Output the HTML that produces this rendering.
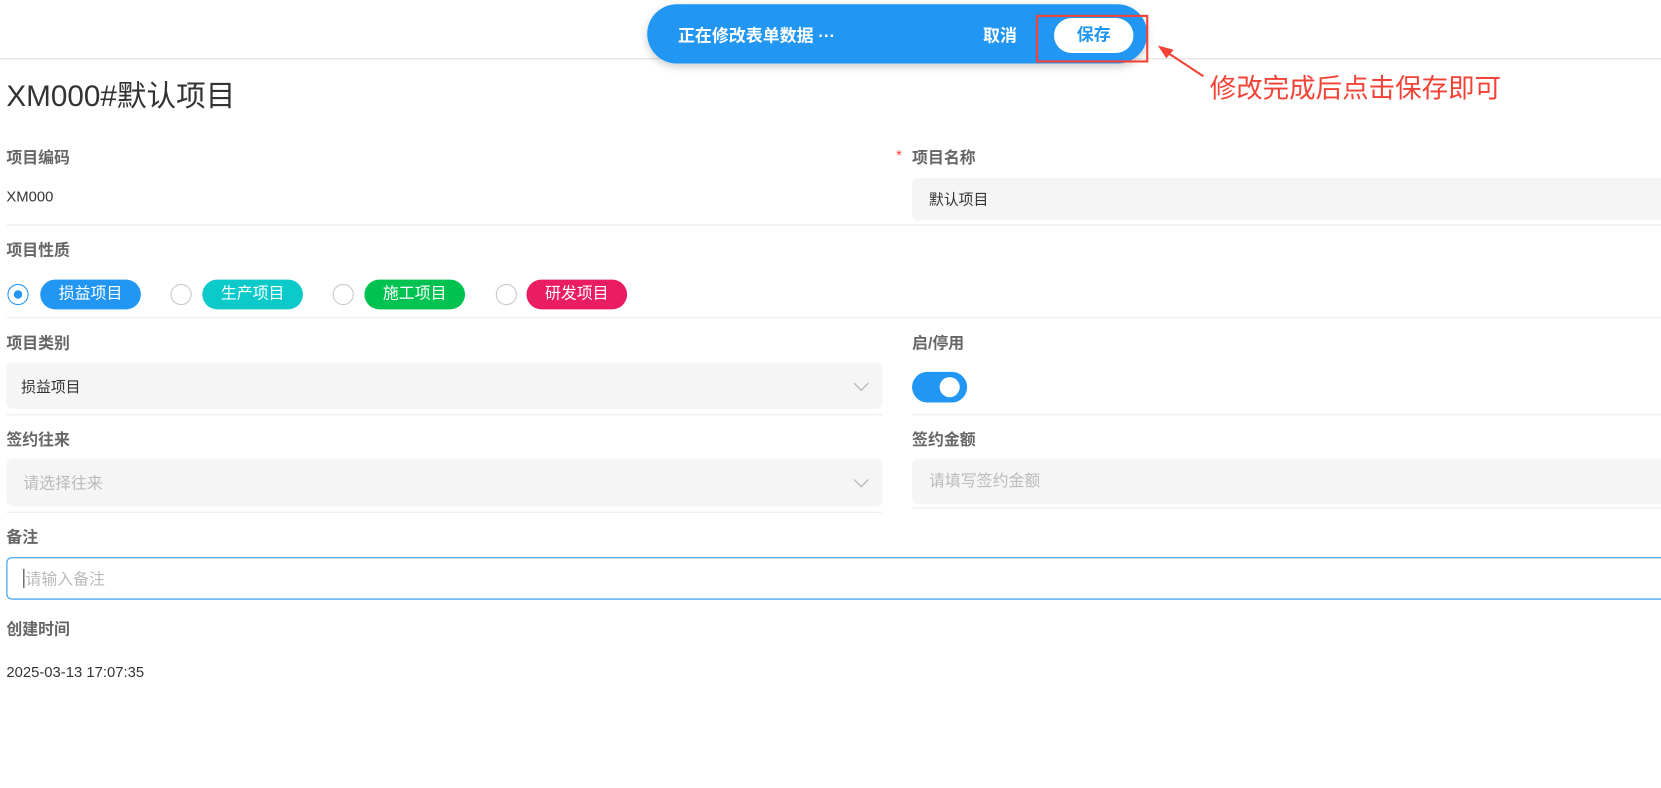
<!DOCTYPE html>
<html><head><meta charset="utf-8"><style>
*{box-sizing:border-box;margin:0;padding:0}
body{width:1661px;height:788px;background:#fff;font-family:"Liberation Sans","Noto Sans CJK SC",sans-serif;position:relative;overflow:hidden;color:#333}
#w{position:absolute;left:0;top:0;width:1568px;height:744px;transform:scale(1.0593);transform-origin:0 0}
.a{position:absolute}
.lbl{font-size:15px;font-weight:bold;color:#666}
.val{font-size:14px;color:#333}
.line{height:1px;background:#ebebeb}
.box{background:#f5f5f5;border-radius:6px}
.tag{height:28px;border-radius:14px;color:#fff;font-size:15px;line-height:28px;text-align:center;width:95px}
.rad{width:20px;height:20px;border:1.5px solid #c8c8c8;border-radius:50%}
.chev{width:10px;height:10px;border-right:1.5px solid #aaa;border-bottom:1.5px solid #aaa;transform:rotate(45deg)}
</style></head><body><div id="w">
<div class="a" style="left:0;top:55px;width:1661px;height:1px;background:#dcdcdc"></div>
<div class="a" style="left:611px;top:4px;width:472px;height:56px;border-radius:28px;background:#2196f3;box-shadow:0 3px 8px rgba(0,0,0,.2)"></div>
<div class="a" style="left:640px;top:20px;color:#fff;font-weight:bold;font-size:16px">正在修改表单数据 ···</div>
<div class="a" style="left:928px;top:20px;color:#fff;font-weight:bold;font-size:16px">取消</div>
<div class="a" style="left:995px;top:17px;width:75px;height:33px;border-radius:17px;background:#fff;color:#2196f3;font-weight:bold;font-size:16px;text-align:center;line-height:33px">保存</div>
<div class="a" style="left:978px;top:14px;width:106px;height:45px;border:2px solid #f44336"></div>
<svg class="a" style="left:1090px;top:40px" width="50" height="36"><line x1="46" y1="32" x2="8" y2="7" stroke="#f44336" stroke-width="2"/><polygon points="3,3 18,7 11,15" fill="#f44336"/></svg>
<div class="a" style="left:1142px;top:64px;color:#f44336;font-size:25px">修改完成后点击保存即可</div>
<div class="a" style="left:6px;top:69px;font-size:28px;color:#333">XM000#默认项目</div>

<div class="a lbl" style="left:6px;top:138px">项目编码</div>
<div class="a val" style="left:6px;top:177px">XM000</div>
<div class="a" style="left:846px;top:138px;color:#f44336;font-size:14px">*</div>
<div class="a lbl" style="left:861px;top:138px">项目名称</div>
<div class="a box" style="left:861px;top:168px;width:820px;height:40px"></div>
<div class="a val" style="left:877px;top:178px">默认项目</div>
<div class="a line" style="left:6px;top:212px;width:1655px"></div>

<div class="a lbl" style="left:6px;top:225px">项目性质</div>
<div class="a rad" style="left:7px;top:268px;border-color:#2196f3"></div>
<div class="a" style="left:13px;top:274px;width:8px;height:8px;border-radius:50%;background:#2196f3"></div>
<div class="a tag" style="left:38px;top:264px;background:#2196f3">损益项目</div>
<div class="a rad" style="left:161px;top:268px"></div>
<div class="a tag" style="left:191px;top:264px;background:#0ccac9">生产项目</div>
<div class="a rad" style="left:314px;top:268px"></div>
<div class="a tag" style="left:344px;top:264px;background:#00c250">施工项目</div>
<div class="a rad" style="left:468px;top:268px"></div>
<div class="a tag" style="left:497px;top:264px;background:#ea1d63">研发项目</div>
<div class="a line" style="left:6px;top:299px;width:1655px"></div>

<div class="a lbl" style="left:6px;top:313px">项目类别</div>
<div class="a box" style="left:6px;top:342px;width:827px;height:44px"></div>
<div class="a val" style="left:20px;top:355px">损益项目</div>
<div class="a chev" style="left:808px;top:357px"></div>
<div class="a line" style="left:6px;top:391px;width:827px"></div>
<div class="a lbl" style="left:861px;top:313px">启/停用</div>
<div class="a" style="left:861px;top:351px;width:52px;height:29px;border-radius:15px;background:#2196f3"></div>
<div class="a" style="left:887px;top:356px;width:19px;height:19px;border-radius:50%;background:#fff"></div>
<div class="a line" style="left:861px;top:391px;width:800px"></div>

<div class="a lbl" style="left:6px;top:404px">签约往来</div>
<div class="a box" style="left:6px;top:433px;width:827px;height:45px"></div>
<div class="a" style="left:22px;top:445px;font-size:15px;color:#bbb">请选择往来</div>
<div class="a chev" style="left:808px;top:448px"></div>
<div class="a line" style="left:6px;top:483px;width:827px"></div>
<div class="a lbl" style="left:861px;top:404px">签约金额</div>
<div class="a box" style="left:861px;top:433px;width:820px;height:43px"></div>
<div class="a" style="left:877px;top:443px;font-size:15px;color:#bbb">请填写签约金额</div>
<div class="a line" style="left:861px;top:479px;width:800px"></div>

<div class="a lbl" style="left:6px;top:496px">备注</div>
<div class="a" style="left:6px;top:526px;width:1670px;height:40px;border:1px solid #2196f3;border-radius:5px"></div>
<div class="a" style="left:22px;top:537px;width:1px;height:18px;background:#333"></div>
<div class="a" style="left:24px;top:536px;font-size:15px;color:#bbb">请输入备注</div>

<div class="a lbl" style="left:6px;top:583px">创建时间</div>
<div class="a val" style="left:6px;top:626px">2025-03-13 17:07:35</div>
</div></body></html>
